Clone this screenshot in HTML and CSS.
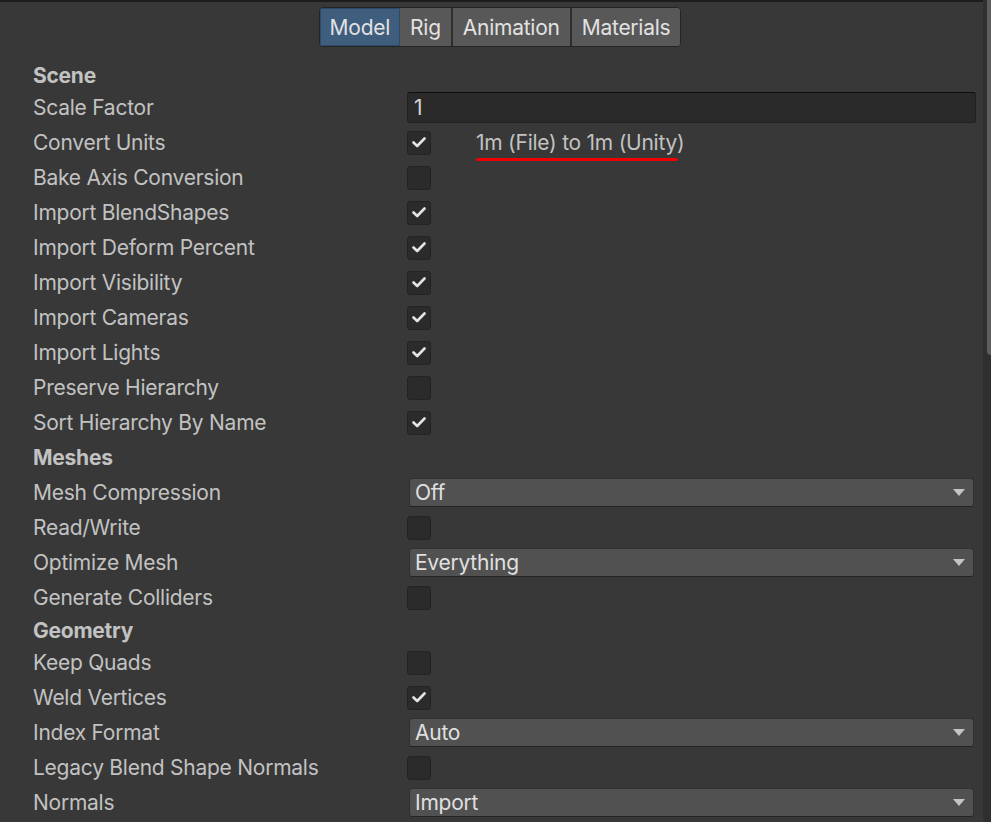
FILE: index.html
```html
<!DOCTYPE html>
<html lang="en">
<head>
<meta charset="utf-8">
<title>Model Import Settings</title>
<link rel="stylesheet" href="styles.css">
</head>
<body>
<div class="window">
  <div class="inspector">
    <div class="topline"></div>
    <div class="tabbar">
      <div class="tabs">
        <span class="tab active">Model</span>
        <span class="tab">Rig</span>
        <span class="tab sep">Animation</span>
        <span class="tab sep">Materials</span>
      </div>
    </div>
    <div class="form">
      <div class="row header"><span class="label bold">Scene</span></div>
      <div class="row"><span class="label">Scale Factor</span><div class="field"><div class="textfield">1</div></div></div>
      <div class="row"><span class="label">Convert Units</span><div class="field units"><span class="check on"><svg viewBox="0 0 14 11" width="14" height="11"><polyline points="1.5,5.5 5.2,9 12.5,1.5" /></svg></span><span class="note">1m (File) to 1m (Unity)</span></div></div>
      <div class="row"><span class="label">Bake Axis Conversion</span><div class="field"><span class="check"></span></div></div>
      <div class="row"><span class="label">Import BlendShapes</span><div class="field"><span class="check on"><svg viewBox="0 0 14 11" width="14" height="11"><polyline points="1.5,5.5 5.2,9 12.5,1.5" /></svg></span></div></div>
      <div class="row"><span class="label">Import Deform Percent</span><div class="field"><span class="check on"><svg viewBox="0 0 14 11" width="14" height="11"><polyline points="1.5,5.5 5.2,9 12.5,1.5" /></svg></span></div></div>
      <div class="row"><span class="label">Import Visibility</span><div class="field"><span class="check on"><svg viewBox="0 0 14 11" width="14" height="11"><polyline points="1.5,5.5 5.2,9 12.5,1.5" /></svg></span></div></div>
      <div class="row"><span class="label">Import Cameras</span><div class="field"><span class="check on"><svg viewBox="0 0 14 11" width="14" height="11"><polyline points="1.5,5.5 5.2,9 12.5,1.5" /></svg></span></div></div>
      <div class="row"><span class="label">Import Lights</span><div class="field"><span class="check on"><svg viewBox="0 0 14 11" width="14" height="11"><polyline points="1.5,5.5 5.2,9 12.5,1.5" /></svg></span></div></div>
      <div class="row"><span class="label">Preserve Hierarchy</span><div class="field"><span class="check"></span></div></div>
      <div class="row"><span class="label">Sort Hierarchy By Name</span><div class="field"><span class="check on"><svg viewBox="0 0 14 11" width="14" height="11"><polyline points="1.5,5.5 5.2,9 12.5,1.5" /></svg></span></div></div>
      <div class="row"><span class="label bold">Meshes</span></div>
      <div class="row"><span class="label">Mesh Compression</span><div class="field"><div class="dropdown"><span>Off</span><svg class="arrow" viewBox="0 0 12 7" width="12" height="7"><polygon points="0,0 12,0 6,7" /></svg></div></div></div>
      <div class="row"><span class="label">Read/Write</span><div class="field"><span class="check"></span></div></div>
      <div class="row"><span class="label">Optimize Mesh</span><div class="field"><div class="dropdown"><span>Everything</span><svg class="arrow" viewBox="0 0 12 7" width="12" height="7"><polygon points="0,0 12,0 6,7" /></svg></div></div></div>
      <div class="row"><span class="label">Generate Colliders</span><div class="field"><span class="check"></span></div></div>
      <div class="row header"><span class="label bold">Geometry</span></div>
      <div class="row"><span class="label">Keep Quads</span><div class="field"><span class="check"></span></div></div>
      <div class="row"><span class="label">Weld Vertices</span><div class="field"><span class="check on"><svg viewBox="0 0 14 11" width="14" height="11"><polyline points="1.5,5.5 5.2,9 12.5,1.5" /></svg></span></div></div>
      <div class="row"><span class="label">Index Format</span><div class="field"><div class="dropdown"><span>Auto</span><svg class="arrow" viewBox="0 0 12 7" width="12" height="7"><polygon points="0,0 12,0 6,7" /></svg></div></div></div>
      <div class="row"><span class="label">Legacy Blend Shape Normals</span><div class="field"><span class="check"></span></div></div>
      <div class="row"><span class="label">Normals</span><div class="field"><div class="dropdown"><span>Import</span><svg class="arrow" viewBox="0 0 12 7" width="12" height="7"><polygon points="0,0 12,0 6,7" /></svg></div></div></div>
    </div>
  </div>
  <div class="scrollbar"><div class="thumb"></div></div>
</div>
</body>
</html>
```
FILE: styles.css
```css
html, body {
  margin: 0;
  padding: 0;
  background: #383838;
  overflow: hidden;
}
body {
  font-family: "Inter", "Noto Sans", sans-serif;
  font-size: 21px;
  letter-spacing: -0.25px;
  color: #c2c2c2;
}
.window {
  display: flex;
  width: 991px;
  height: 822px;
}
.inspector {
  flex: 1;
  display: flex;
  flex-direction: column;
  min-width: 0;
}
.topline {
  height: 2px;
  background: #1d1d1d;
}
.tabbar {
  display: flex;
  justify-content: center;
  padding: 5px 0 0 17px;
  height: 58px;
  box-sizing: border-box;
}
.tabs {
  display: flex;
  height: 40px;
  border: 1px solid #242424;
  border-radius: 4px;
  overflow: hidden;
  box-sizing: border-box;
  background: #585858;
}
.tab {
  display: flex;
  align-items: center;
  padding: 0 10px;
  color: #e2e2e2;
  background: #585858;
}
.tab.active {
  background: #3f5e7e;
  box-shadow: inset 0 0 0 1px #2f4a66;
}
.tab.sep {
  border-left: 2px solid #2e2e2e;
}
.form {
  padding: 0 7px 0 33px;
}
.row {
  display: grid;
  grid-template-columns: 374px 1fr;
  align-items: center;
  height: 35px;
}
.row.header {
  height: 30px;
}
.label {
  white-space: nowrap;
}
.label.bold {
  font-weight: 700;
}
.field {
  display: flex;
  align-items: center;
  min-width: 0;
}
.textfield {
  flex: 1;
  height: 31px;
  box-sizing: border-box;
  background: #2a2a2a;
  border: 1px solid #212121;
  border-top-color: #0e0e0e;
  border-radius: 3px;
  padding-left: 6px;
  display: flex;
  align-items: center;
  color: #d4d4d4;
}
.check {
  width: 24px;
  height: 24px;
  box-sizing: border-box;
  background: #2b2b2b;
  border: 1px solid #232323;
  border-radius: 3px;
  display: flex;
  align-items: center;
  justify-content: center;
}
.check svg polyline {
  fill: none;
  stroke: #e4e4e4;
  stroke-width: 2.6;
  stroke-linecap: round;
  stroke-linejoin: round;
}
.units {
  gap: 45px;
}
.note {
  position: relative;
  color: #c2c2c2;
}
.note::after {
  content: "";
  position: absolute;
  left: 0;
  right: 6px;
  bottom: -6px;
  height: 3px;
  border-radius: 2px;
  background: #ee0000;
}
.dropdown {
  flex: 1;
  margin: 0 2px;
  height: 29px;
  box-sizing: border-box;
  background: #515151;
  border: 1px solid #303030;
  border-bottom-color: #242424;
  border-radius: 3px;
  display: flex;
  align-items: center;
  justify-content: space-between;
  padding: 0 8px 0 5px;
  color: #e0e0e0;
}
.arrow polygon {
  fill: #c4c4c4;
}
.scrollbar {
  width: 8px;
  background: #2f2f2f;
  overflow: hidden;
}
.thumb {
  margin: -4px 0 0 4px;
  width: 8px;
  height: 359px;
  border-radius: 4px;
  background: #5e5e5e;
}
```
